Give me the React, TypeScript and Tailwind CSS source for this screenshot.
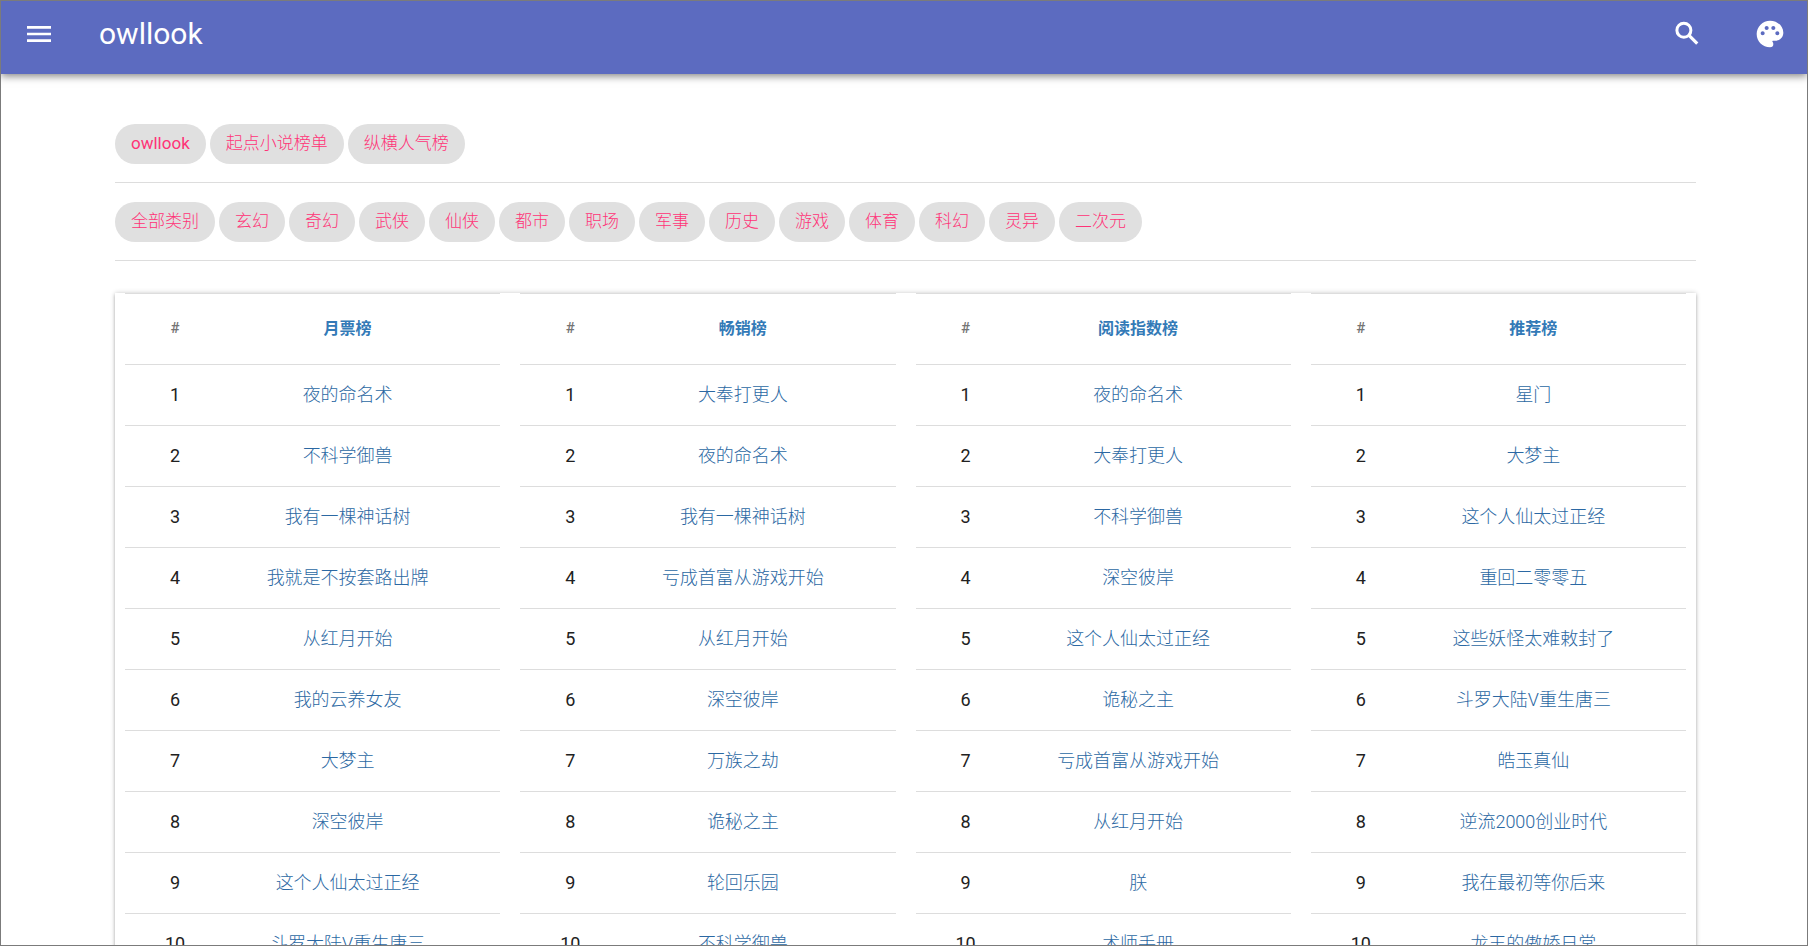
import { MdMenu, MdPalette } from "react-icons/md";

type Ranking = {
  title: string;
  books: string[];
};

const sources = ["owllook", "起点小说榜单", "纵横人气榜"];

const categories = [
  "全部类别",
  "玄幻",
  "奇幻",
  "武侠",
  "仙侠",
  "都市",
  "职场",
  "军事",
  "历史",
  "游戏",
  "体育",
  "科幻",
  "灵异",
  "二次元",
];

const rankings: Ranking[] = [
  {
    title: "月票榜",
    books: [
      "夜的命名术",
      "不科学御兽",
      "我有一棵神话树",
      "我就是不按套路出牌",
      "从红月开始",
      "我的云养女友",
      "大梦主",
      "深空彼岸",
      "这个人仙太过正经",
      "斗罗大陆V重生唐三",
    ],
  },
  {
    title: "畅销榜",
    books: [
      "大奉打更人",
      "夜的命名术",
      "我有一棵神话树",
      "亏成首富从游戏开始",
      "从红月开始",
      "深空彼岸",
      "万族之劫",
      "诡秘之主",
      "轮回乐园",
      "不科学御兽",
    ],
  },
  {
    title: "阅读指数榜",
    books: [
      "夜的命名术",
      "大奉打更人",
      "不科学御兽",
      "深空彼岸",
      "这个人仙太过正经",
      "诡秘之主",
      "亏成首富从游戏开始",
      "从红月开始",
      "朕",
      "术师手册",
    ],
  },
  {
    title: "推荐榜",
    books: [
      "星门",
      "大梦主",
      "这个人仙太过正经",
      "重回二零零五",
      "这些妖怪太难敕封了",
      "斗罗大陆V重生唐三",
      "皓玉真仙",
      "逆流2000创业时代",
      "我在最初等你后来",
      "龙王的傲娇日常",
    ],
  },
];

export default function App() {
  return (
    <div className="flex h-screen flex-col overflow-hidden border border-[#7b7b7b] bg-white font-['Roboto','Noto_Sans_CJK_SC_Light','Noto_Sans_CJK_SC',sans-serif]">
      <Header />
      <main className="min-h-0 flex-1 overflow-y-auto pl-[114px] pr-[111px] pt-[50px] [scrollbar-width:none]">
        <ChipRow labels={sources} />
        <ChipRow labels={categories} />
        <section className="mt-8 grid grid-cols-4 bg-white shadow-[0_2px_3px_rgba(0,0,0,0.2),0_0_5px_rgba(0,0,0,0.2)]">
          {rankings.map((ranking) => (
            <RankingTable key={ranking.title} ranking={ranking} />
          ))}
        </section>
      </main>
    </div>
  );
}

function Header() {
  return (
    <header className="relative z-10 flex h-[73px] shrink-0 items-center bg-[#5c6bc0] pb-2 pl-[22px] pr-[21px] text-white shadow-[0_2px_8px_rgba(0,0,0,0.5)]">
      <button type="button" aria-label="菜单">
        <MdMenu size={32} />
      </button>
      <h1 className="ml-11 flex-1 text-[30px] leading-9">owllook</h1>
      <button type="button" aria-label="搜索">
        <SearchIcon />
      </button>
      <button type="button" aria-label="主题" className="ml-[52px]">
        <MdPalette size={32} />
      </button>
    </header>
  );
}

function SearchIcon() {
  return (
    <svg width="30" height="30" viewBox="0 0 24 24" fill="none">
      <circle cx="9.5" cy="9" r="5.6" stroke="currentColor" strokeWidth="2.4" />
      <path d="M13.6 13.1L20.2 19.7" stroke="currentColor" strokeWidth="2.6" />
    </svg>
  );
}

function ChipRow({ labels }: { labels: string[] }) {
  return (
    <nav className="mb-[19px] flex flex-wrap gap-1 border-b border-[#dddddd] pb-[18px]">
      {labels.map((label) => (
        <a
          key={label}
          href="#"
          className="flex h-10 items-center rounded-full bg-[#e0e0e0] px-4 text-[17px] text-[#ff3377]"
        >
          {label}
        </a>
      ))}
    </nav>
  );
}

function RankingTable({ ranking }: { ranking: Ranking }) {
  return (
    <div className="px-[10px]">
      <table className="w-full table-fixed border-collapse text-center text-lg">
        <thead>
          <tr className="h-[71px] border-y border-[#dddddd]">
            <th className="w-[70px] pl-[30px] text-[15px] font-medium text-[#757575]">
              #
            </th>
            <th className="font-['Roboto','Noto_Sans_CJK_SC',sans-serif] text-base font-bold">
              <a href="#" className="text-[#337ab7]">
                {ranking.title}
              </a>
            </th>
          </tr>
        </thead>
        <tbody>
          {ranking.books.map((book, index) => (
            <tr key={book} className="h-[61px] border-b border-[#dddddd]">
              <td className="pl-[30px] text-[#212121]">{index + 1}</td>
              <td>
                <a href="#" className="font-light text-[#2b68a3]">
                  {book}
                </a>
              </td>
            </tr>
          ))}
        </tbody>
      </table>
    </div>
  );
}
